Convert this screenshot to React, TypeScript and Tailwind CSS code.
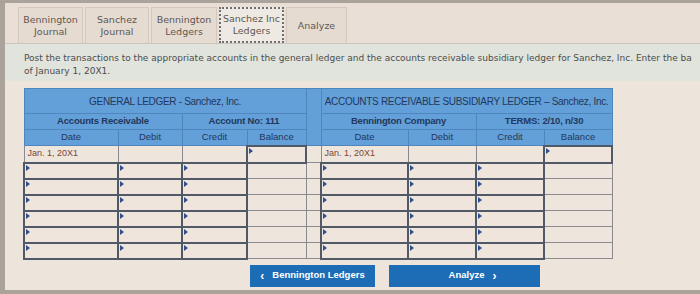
import React from "react"

const tabs = [
    { label: ["Bennington", "Journal"], w: "w-[65px]" },
    { label: ["Sanchez", "Journal"], w: "w-[64px]" },
    { label: ["Bennington", "Ledgers"], w: "w-[66px]" },
    { label: ["Sanchez Inc", "Ledgers"], w: "w-[65px]", active: true },
    { label: ["Analyze"], w: "w-[61px]" },
]

function Marker() {
    return <span className="absolute left-[1px] top-[1px] w-0 h-0 border-t-[3px] border-b-[3px] border-l-[4px] border-t-transparent border-b-transparent border-l-[#2c4f8e]" />
}

function InputCell() {
    return (
        <td className="relative border-2 border-[#515866] bg-[#efe5dc] p-0">
            <Marker />
        </td>
    )
}

function PlainCell({ children }: { children?: React.ReactNode }) {
    return (
        <td className="border border-[#8a8a8e] bg-[#eee5dd] px-[3px] text-[9px] text-[#7a4634] whitespace-nowrap">
            {children}
        </td>
    )
}

const hd = "border border-[#4f86bd] bg-[#639fd8] text-[#22385c] text-center whitespace-nowrap overflow-hidden"

export default function App() {
    const rows = [1, 2, 3, 4, 5, 6]
    return (
        <div className="w-[700px] h-[294px] bg-[#a9a39c] pl-[5px] pt-[3px] pb-[4px] font-['Liberation_Sans',Arial,sans-serif]">
            <div className="h-full bg-[#ede4dc] flex flex-col">
                <div className="h-[41px] flex items-end gap-[2px] pl-[13px] bg-[#e9dfd6] border-b border-[#cfc4b9]">
                    {tabs.map((t, i) => (
                        <div
                            key={i}
                            className={`${t.w} h-[36px] flex flex-col items-center justify-center text-[9.5px] leading-[12px] text-[#5d5853] font-['DejaVu_Sans',sans-serif] ${t.active ? "bg-[#efe9e3] border-2 border-dotted border-[#6e6e72]" : "bg-[#e6dbd1] border border-[#d4c9be] border-b-0"}`}
                        >
                            {t.label.map((l) => <span key={l}>{l}</span>)}
                        </div>
                    ))}
                </div>

                <div className="h-[37px] bg-[#e1e3dd] pl-[19px] pt-[8px] text-[9px] leading-[13px] text-[#4b4d4c] font-['DejaVu_Sans',sans-serif] overflow-hidden">
                    <p className="whitespace-nowrap">Post the transactions to the appropriate accounts in the general ledger and the accounts receivable subsidiary ledger for Sanchez, Inc. Enter the ba</p>
                    <p>of January 1, 20X1.</p>
                </div>

                <div className="pl-[18px] pt-[7px]">
                    <table className="border-collapse table-fixed w-[589px]">
                        <colgroup>
                            <col className="w-[94px]" />
                            <col className="w-[64px]" />
                            <col className="w-[65px]" />
                            <col className="w-[59px]" />
                            <col className="w-[15px]" />
                            <col className="w-[87px]" />
                            <col className="w-[68px]" />
                            <col className="w-[68px]" />
                            <col className="w-[68px]" />
                        </colgroup>
                        <tbody>
                            <tr className="h-[25px] text-[10px] tracking-[-0.3px]">
                                <td colSpan={4} className={hd}>GENERAL LEDGER - Sanchez, Inc.</td>
                                <td rowSpan={3} className={hd}></td>
                                <td colSpan={4} className={hd}>ACCOUNTS RECEIVABLE SUBSIDIARY LEDGER – Sanchez, Inc.</td>
                            </tr>
                            <tr className="h-[16px] text-[9.5px] font-bold tracking-[-0.2px]">
                                <td colSpan={2} className={hd}>Accounts Receivable</td>
                                <td colSpan={2} className={hd}>Account No: 111</td>
                                <td colSpan={2} className={hd}>Bennington Company</td>
                                <td colSpan={2} className={hd}>TERMS: 2/10, n/30</td>
                            </tr>
                            <tr className="h-[16px] text-[9.5px]">
                                {["Date", "Debit", "Credit", "Balance"].map((h) => <td key={"l" + h} className={hd}>{h}</td>)}
                                {["Date", "Debit", "Credit", "Balance"].map((h) => <td key={"r" + h} className={hd}>{h}</td>)}
                            </tr>
                            <tr className="h-[17px]">
                                <PlainCell>Jan. 1, 20X1</PlainCell>
                                <PlainCell />
                                <PlainCell />
                                <InputCell />
                                <PlainCell />
                                <PlainCell>Jan. 1, 20X1</PlainCell>
                                <PlainCell />
                                <PlainCell />
                                <InputCell />
                            </tr>
                            {rows.map((r) => (
                                <tr key={r} className="h-[16px]">
                                    <InputCell />
                                    <InputCell />
                                    <InputCell />
                                    <PlainCell />
                                    <PlainCell />
                                    <InputCell />
                                    <InputCell />
                                    <InputCell />
                                    <PlainCell />
                                </tr>
                            ))}
                        </tbody>
                    </table>
                </div>

                <div className="flex gap-[14px] pl-[245px] pt-[5px]">
                    <button className="w-[125px] h-[22px] bg-[#1c6db6] text-white text-[9.5px] font-bold flex items-center justify-center gap-[8px]">
                        <span className="text-[12px] leading-none">‹</span>
                        <span>Bennington Ledgers</span>
                    </button>
                    <button className="w-[151px] h-[22px] bg-[#1c6db6] text-white text-[9.5px] font-bold flex items-center justify-center gap-[8px] pl-[16px]">
                        <span>Analyze</span>
                        <span className="text-[12px] leading-none">›</span>
                    </button>
                </div>
            </div>
        </div>
    )
}
